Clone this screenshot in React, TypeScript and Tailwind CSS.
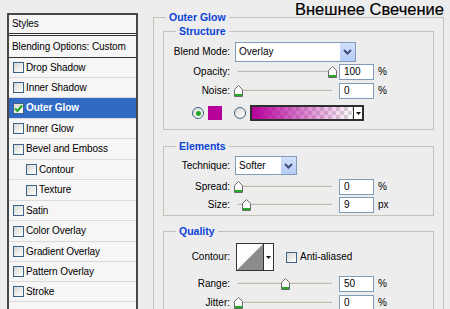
import React from "react";

type ListRow = { label: string; h: string; indent?: boolean; active?: boolean };

const listRows: ListRow[] = [
  { label: "Drop Shadow", h: "h-[20px]" },
  { label: "Inner Shadow", h: "h-[20px]" },
  { label: "Outer Glow", h: "h-[21px]", active: true },
  { label: "Inner Glow", h: "h-[20px]" },
  { label: "Bevel and Emboss", h: "h-[21px]" },
  { label: "Contour", h: "h-[20px]", indent: true },
  { label: "Texture", h: "h-[21px]", indent: true },
  { label: "Satin", h: "h-[20px]" },
  { label: "Color Overlay", h: "h-[21px]" },
  { label: "Gradient Overlay", h: "h-[20px]" },
  { label: "Pattern Overlay", h: "h-[20px]" },
  { label: "Stroke", h: "h-[20px]" },
  { label: "", h: "h-[20px]" },
];

function CheckBox({ checked }: { checked?: boolean }) {
  return (
    <div className="w-[11px] h-[11px] shrink-0 border border-[#3d6389] bg-linear-to-br from-[#d8d8d2] to-white flex items-center justify-center">
      {checked && (
        <svg width="9" height="9" viewBox="0 0 9 9">
          <path d="M1 4.5 L3.5 7 L8 1.5" fill="none" stroke="#21a121" strokeWidth="2" />
        </svg>
      )}
    </div>
  );
}

function StylesList() {
  return (
    <div className="mt-[13px] ml-[7px] w-[131px] shrink-0 self-start border-2 border-b-0 border-[#474747] bg-[#f6f6f6] whitespace-nowrap tracking-[-0.1px]">
      <div className="h-[21px] pl-[3px] flex items-center border-b-[3px] border-double border-[#333]">
        Styles
      </div>
      <div className="h-[22px] pl-[3px] flex items-center border-b border-[#333]">
        Blending Options: Custom
      </div>
      {listRows.map((r, i) => (
        <div
          key={i}
          className={`${r.h} flex items-center gap-[2px] border-b border-[#dadada] ${
            r.indent ? "pl-[17px]" : "pl-[4px]"
          } ${r.active ? "bg-[#316ac5] text-white font-bold" : ""}`}
        >
          {r.label && <CheckBox checked={r.active} />}
          <span>{r.label}</span>
        </div>
      ))}
    </div>
  );
}

function Chevron() {
  return (
    <svg width="9" height="6" viewBox="0 0 9 6">
      <path d="M1 1 L4.5 4.5 L8 1" fill="none" stroke="#3a4f7a" strokeWidth="2" />
    </svg>
  );
}

function Select({ value, width }: { value: string; width: string }) {
  return (
    <div className={`${width} h-full border border-[#7f9db9] bg-white flex items-center`}>
      <span className="flex-1 pl-[3px]">{value}</span>
      <div className="w-[15px] h-full bg-linear-to-b from-[#d3e0fd] to-[#b6cbf7] flex items-center justify-center">
        <Chevron />
      </div>
    </div>
  );
}

function Thumb() {
  return (
    <svg width="9" height="12" viewBox="0 0 9 12">
      <path d="M0.5 11.5 V4.5 L4.5 0.5 L8.5 4.5 V11.5 Z" fill="#fbfbfb" stroke="#6b6b6b" />
      <rect x="1" y="9" width="7" height="2" fill="#25a825" />
    </svg>
  );
}

function Slider({ frac }: { frac: number }) {
  return (
    <div className="relative w-[100px] h-full">
      <div className="absolute left-[3px] right-[3px] top-1/2 -translate-y-1/2 h-[3px] rounded-full border-t border-[#9c9c94] bg-[#dedbd2] border-b border-b-white" />
      <div className="absolute top-1/2 -translate-y-[6px]" style={{ left: 3 + frac * 94 - 4.5 }}>
        <Thumb />
      </div>
    </div>
  );
}

function ValueBox({ value, unit }: { value: string; unit: string }) {
  return (
    <>
      <div className="ml-[4px] w-[35px] h-[16px] border border-[#7f9db9] bg-white flex items-center pl-[4px]">
        {value}
      </div>
      <span className="ml-[4px]">{unit}</span>
    </>
  );
}

function Label({ text }: { text: string }) {
  return <span className="w-[66px] shrink-0 text-right mr-[5px]">{text}</span>;
}

function SliderRow({ label, frac, value, unit, cls }: { label: string; frac: number; value: string; unit: string; cls: string }) {
  return (
    <div className={`flex items-center h-[17px] ${cls}`}>
      <Label text={label} />
      <Slider frac={frac} />
      <ValueBox value={value} unit={unit} />
    </div>
  );
}

function Radio({ checked }: { checked?: boolean }) {
  return (
    <div className="w-[12px] h-[12px] rounded-full border border-[#3d6389] bg-linear-to-br from-[#dcdcd6] to-white flex items-center justify-center">
      {checked && <div className="w-[5px] h-[5px] rounded-full bg-[#22a822]" />}
    </div>
  );
}

function DownArrow() {
  return (
    <svg width="5" height="3" viewBox="0 0 5 3">
      <path d="M0 0 H5 L2.5 3 Z" fill="#111" />
    </svg>
  );
}

function Legend({ text }: { text: string }) {
  return (
    <legend className="ml-[12px] px-[3px] font-bold text-[10.5px] text-[#0a42d6] leading-[13px]">{text}</legend>
  );
}

export default function App() {
  return (
    <div className="relative flex w-[450px] h-[309px] overflow-hidden bg-[#ededed] font-['Liberation_Sans',Arial,sans-serif] text-[10px] leading-none text-black">
      <StylesList />

      <fieldset className="ml-[15px] mt-[11px] w-[291px] self-start border border-[#c2c2b6] pb-[20px]">
        <Legend text="Outer Glow" />

        {/* Structure */}
        <fieldset className="mx-[9px] mt-[1px] border border-[#c2c2b6] pb-[7px]">
          <Legend text="Structure" />
          <div className="flex items-center h-[20px] mt-[4px]">
            <Label text="Blend Mode:" />
            <Select value="Overlay" width="w-[121px]" />
          </div>
          <SliderRow label="Opacity:" frac={1} value="100" unit="%" cls="mt-[1px]" />
          <SliderRow label="Noise:" frac={0} value="0" unit="%" cls="mt-[2px]" />
          <div className="flex items-center h-[18px] mt-[5px] pl-[28px]">
            <Radio checked />
            <div className="ml-[4px] w-[14px] h-[14px] bg-[#b5009a]" />
            <div className="ml-[12px]">
              <Radio />
            </div>
            <div className="ml-[4px] w-[114px] h-[16px] border-2 border-[#2e2e2e] flex">
              <div className="flex-1 bg-[image:conic-gradient(#d9d9d9_25%,#fff_0_50%,#d9d9d9_0_75%,#fff_0)] bg-[length:8px_8px]">
                <div className="w-full h-full bg-linear-to-r from-[#b5009a] via-[#b5009a80] to-[#b5009a00]" />
              </div>
              <div className="w-[9px] border-l border-[#2e2e2e] bg-white flex items-center justify-center">
                <DownArrow />
              </div>
            </div>
          </div>
        </fieldset>

        {/* Elements */}
        <fieldset className="mx-[9px] mt-[10px] border border-[#c2c2b6] pb-[2px]">
          <Legend text="Elements" />
          <div className="flex items-center h-[19px] mt-[3px]">
            <Label text="Technique:" />
            <Select value="Softer" width="w-[62px]" />
          </div>
          <SliderRow label="Spread:" frac={0} value="0" unit="%" cls="mt-[3px]" />
          <SliderRow label="Size:" frac={0.09} value="9" unit="px" cls="mt-[1px]" />
        </fieldset>

        {/* Quality */}
        <fieldset className="mx-[9px] mt-[9px] border border-[#c2c2b6] pb-[10px]">
          <Legend text="Quality" />
          <div className="flex items-center h-[28px] mt-[5px]">
            <Label text="Contour:" />
            <div className="ml-[1px] w-[38px] h-[28px] border border-[#333] flex bg-white">
              <svg width="26" height="26" viewBox="0 0 26 26" className="shrink-0">
                <polygon points="0,26 26,0 26,26" fill="#8c8c8c" />
              </svg>
              <div className="flex-1 border-l border-[#333] flex items-center justify-center">
                <DownArrow />
              </div>
            </div>
            <div className="ml-[12px]">
              <CheckBox />
            </div>
            <span className="ml-[3px]">Anti-aliased</span>
          </div>
          <SliderRow label="Range:" frac={0.5} value="50" unit="%" cls="mt-[4px]" />
          <SliderRow label="Jitter:" frac={0} value="0" unit="%" cls="mt-[2px]" />
        </fieldset>
      </fieldset>

      <div className="absolute left-[295px] -top-[1px] text-[16.5px] leading-[20px] [-webkit-text-stroke:0.2px_black]">
        Внешнее Свечение
      </div>
    </div>
  );
}
